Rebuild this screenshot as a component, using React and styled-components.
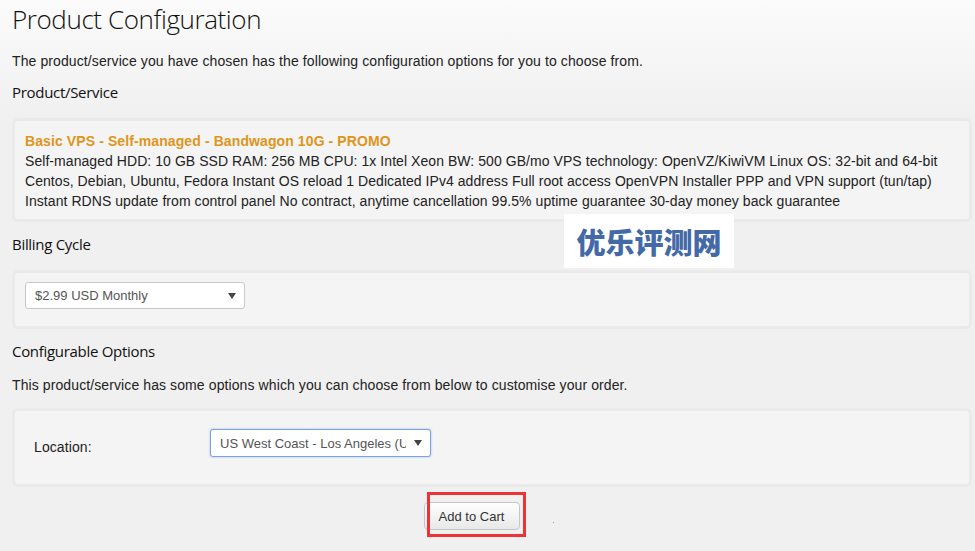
import React from 'react';
import styled, { createGlobalStyle } from 'styled-components';

const GlobalStyle = createGlobalStyle`
  html, body {
    margin: 0;
    padding: 0;
  }
  body {
    background: linear-gradient(to bottom, #fbfbfb 0, #f0f0f0 120px) #f0f0f0;
    font-family: "Liberation Sans", Arial, sans-serif;
    font-size: 14px;
    color: #333;
  }
`;

//styles
const Page = styled.div`
  position: relative;
  width: 975px;
  height: 551px;
  overflow: hidden;
  box-sizing: border-box;
  padding: 0 3px 0 12px;
`;

const Title = styled.h1`
  margin: 0;
  padding-top: 2px;
  font-family: "Open Sans", sans-serif;
  font-weight: 300;
  font-size: 26px;
  line-height: 34px;
  color: #111;
  letter-spacing: -0.4px;
`;

const Intro = styled.p`
  margin: ${(p) => p.$top || 0}px 0 0;
  line-height: 20px;
  color: #222;
  letter-spacing: 0.1px;
`;

const Heading = styled.h2`
  margin: ${(p) => p.$top || 0}px 0 0;
  font-family: "Open Sans", sans-serif;
  font-weight: 400;
  font-size: 15px;
  line-height: 22px;
  color: #111;
  letter-spacing: -0.3px;
`;

const Panel = styled.div`
  margin-top: ${(p) => p.$top || 0}px;
  box-sizing: border-box;
  border: 3px solid #eaeaea;
  border-radius: 6px;
  background: #f4f4f4;
  padding: ${(p) => p.$pad};
`;

const ProductName = styled.div`
  color: #e0951a;
  font-weight: bold;
  line-height: 20px;
  letter-spacing: 0.1px;
`;

const Line = styled.div`
  line-height: 20px;
  white-space: nowrap;
  color: #222;
  letter-spacing: 0.06px;
`;

const Select = styled.div`
  display: flex;
  align-items: center;
  justify-content: space-between;
  box-sizing: border-box;
  width: ${(p) => p.$width}px;
  height: ${(p) => p.$height}px;
  padding: 0 8px 0 9px;
  background: #fff;
  border: 1px solid ${(p) => (p.$focus ? '#7aa3e6' : '#c8c8c8')};
  border-radius: 3px;
  box-shadow: ${(p) => (p.$focus ? '0 0 2px rgba(102,150,233,0.7)' : 'none')};
  color: #555;
  font-size: 13px;
  white-space: nowrap;
  overflow: hidden;
`;

const SelectText = styled.span`
  overflow: hidden;
  flex: 1;
`;

const Arrow = styled.svg`
  flex: none;
  margin-left: 8px;
`;

const OptionRow = styled.div`
  display: flex;
  align-items: flex-start;
`;

const Label = styled.div`
  width: 176px;
  padding-top: 8px;
  line-height: 20px;
  color: #222;
  letter-spacing: 0.1px;
`;

const ButtonRow = styled.div`
  display: flex;
  justify-content: center;
  padding-right: 41px;
  margin-top: 15px;
`;

const ButtonWrap = styled.div`
  position: relative;
`;

const CartBtn = styled.button`
  height: 28px;
  width: 96px;
  padding: 0;
  font-family: "Liberation Sans", Arial, sans-serif;
  font-size: 13px;
  color: #333;
  border: 1px solid #c6c6c6;
  border-radius: 4px;
  background: linear-gradient(to bottom, #ffffff 0, #e8e8e8 100%);
  cursor: pointer;
`;

const Highlight = styled.div`
  position: absolute;
  left: 3px;
  top: -10px;
  width: 99px;
  height: 45px;
  box-sizing: border-box;
  border: 3px solid #ee3338;
  pointer-events: none;
`;

const Dot = styled.div`
  position: absolute;
  left: 553px;
  top: 522px;
  width: 1px;
  height: 1px;
  background: #8aa6d0;
`;

const Watermark = styled.div`
  position: absolute;
  left: 564px;
  top: 214px;
  width: 170px;
  height: 54px;
  background: #fff;
  display: flex;
  align-items: center;
  justify-content: center;
  font-family: "Noto Sans CJK SC", sans-serif;
  font-weight: 900;
  font-size: 29px;
  color: #4469a8;
`;

function DropArrow() {
  return (
    <Arrow width="8" height="6" viewBox="0 0 8 6">
      <path d="M0 0 L8 0 L4 6 Z" fill="#444" />
    </Arrow>
  );
}

export default function App() {
  return (
    <Page>
      <GlobalStyle />
      <Title>Product Configuration</Title>
      <Intro $top={15}>
        The product/service you have chosen has the following configuration options for you to choose from.
      </Intro>
      <Heading $top={10}>Product/Service</Heading>
      <Panel $top={15} $pad="10px 10px 8px">
        <ProductName>Basic VPS - Self-managed - Bandwagon 10G - PROMO</ProductName>
        <Line>
          Self-managed HDD: 10 GB SSD RAM: 256 MB CPU: 1x Intel Xeon BW: 500 GB/mo VPS technology: OpenVZ/KiwiVM Linux OS: 32-bit and 64-bit
        </Line>
        <Line>
          Centos, Debian, Ubuntu, Fedora Instant OS reload 1 Dedicated IPv4 address Full root access OpenVPN Installer PPP and VPN support (tun/tap)
        </Line>
        <Line>
          Instant RDNS update from control panel No contract, anytime cancellation 99.5% uptime guarantee 30-day money back guarantee
        </Line>
      </Panel>
      <Heading $top={11}>Billing Cycle</Heading>
      <Panel $top={15} $pad="9px 10px 17px">
        <Select $width={220} $height={27}>
          <SelectText>$2.99 USD Monthly</SelectText>
          <DropArrow />
        </Select>
      </Panel>
      <Heading $top={11}>Configurable Options</Heading>
      <Intro $top={13}>
        This product/service has some options which you can choose from below to customise your order.
      </Intro>
      <Panel $top={13} $pad="18px 10px 27px 19px">
        <OptionRow>
          <Label>Location:</Label>
          <Select $width={221} $height={28} $focus>
            <SelectText>US West Coast - Los Angeles (US)</SelectText>
            <DropArrow />
          </Select>
        </OptionRow>
      </Panel>
      <ButtonRow>
        <ButtonWrap>
          <CartBtn>Add to Cart</CartBtn>
          <Highlight />
        </ButtonWrap>
      </ButtonRow>
      <Dot />
      <Watermark>优乐评测网</Watermark>
    </Page>
  );
}
